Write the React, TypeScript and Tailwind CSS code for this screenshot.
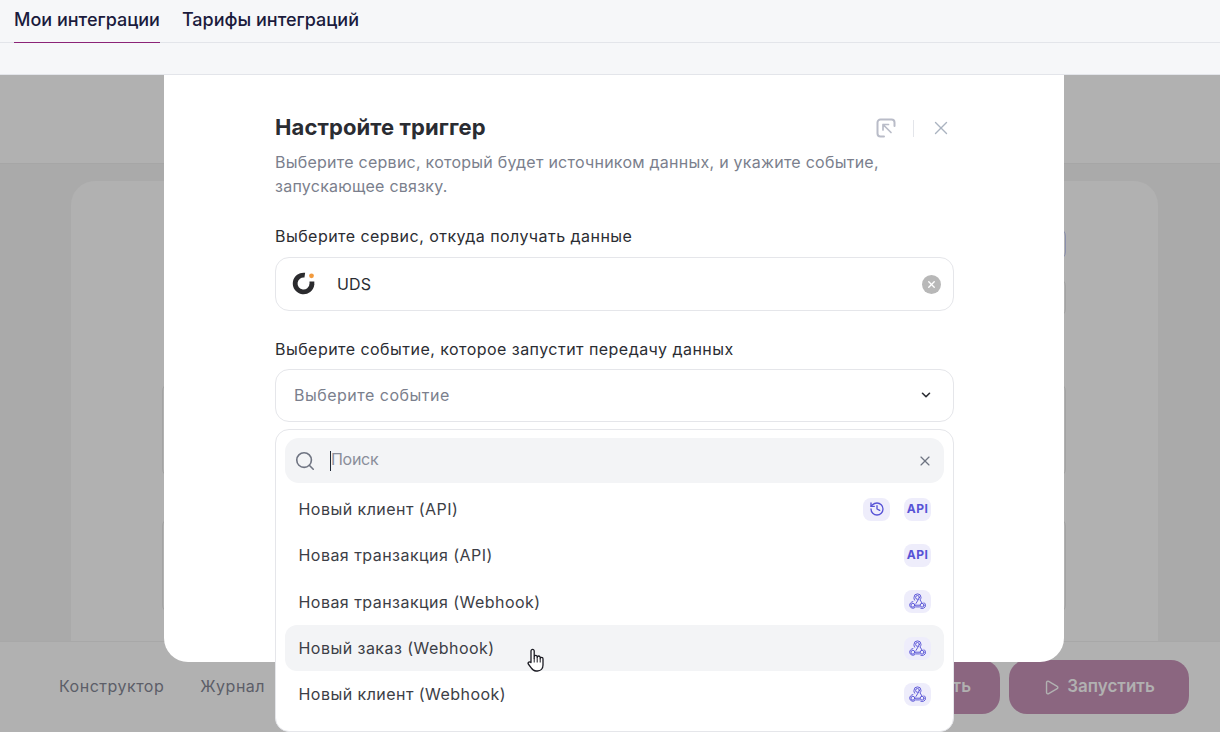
import { ChevronDown, History, Play, Search, X } from "lucide-react";

const events = [
  { name: "Новый клиент (API)", badges: ["history", "api"] },
  { name: "Новая транзакция (API)", badges: ["api"] },
  { name: "Новая транзакция (Webhook)", badges: ["webhook"] },
  { name: "Новый заказ (Webhook)", badges: ["webhook"], hover: true },
  { name: "Новый клиент (Webhook)", badges: ["webhook"] },
];

function WebhookIcon() {
  return (
    <svg width="17" height="17" viewBox="0 0 17 17" fill="none" stroke="currentColor" strokeWidth="0.95" strokeLinecap="round">
      <circle cx="8.5" cy="4.4" r="1.9" />
      <circle cx="3.9" cy="12.2" r="1.9" />
      <circle cx="13.1" cy="12.2" r="1.9" />
      <path d="M5.6 7.2A3.6 3.6 0 0 1 5 4.4a3.5 3.5 0 0 1 7 0c0 1-.4 1.8-1 2.5L13 10" />
      <path d="M9.4 6.4 7 10.4M3.9 8.6c-2 .3-3.2 2-3.2 3.6a3.2 3.2 0 0 0 5.8 1.7h4" />
      <path d="M6.2 12.2h4.6M15 9.7c1.2.7 1.6 1.6 1.6 2.5a3.4 3.4 0 0 1-5 3" />
    </svg>
  );
}

function Badge({ kind }: { kind: string }) {
  if (kind === "api") {
    return (
      <span className="flex h-[23px] w-[27px] items-center justify-center rounded-lg bg-[#eeedfb] text-[12px] font-bold text-[#5753d6]">
        API
      </span>
    );
  }
  return (
    <span className="flex h-[23px] w-[27px] items-center justify-center rounded-lg bg-[#eeedfb] text-[#5753d6]">
      {kind === "history" ? <History size={16} strokeWidth={2} /> : <WebhookIcon />}
    </span>
  );
}

function HandCursor() {
  return (
    <svg width="18" height="26" viewBox="0 0 18 26" className="absolute left-[527px] top-[648px]">
      <path
        d="M4 14V3a1.6 1.6 0 0 1 3.2 0v7.5-1.6a1.5 1.5 0 0 1 3 0v1.2-.6a1.5 1.5 0 0 1 3 0v1.2a1.4 1.4 0 0 1 2.8 0v6.3c0 3.7-2.4 6-5.6 6H9c-2.2 0-3.5-1-4.6-2.8L1.3 16c-.9-1.6 1.5-3 2.7-1.5z"
        fill="#fff"
        stroke="#1a1a22"
        strokeWidth="1.3"
        strokeLinejoin="round"
      />
      <path d="M7.2 10.5v4M10.2 10.5v4M13.2 11v3.5" stroke="#1a1a22" strokeWidth="1" fill="none" />
    </svg>
  );
}

export default function App() {
  return (
    <div className="relative flex h-[732px] w-[1220px] flex-col overflow-hidden bg-[#b1b1b1] font-['Inter',sans-serif]">
      {/* top tabs */}
      <nav className="flex h-[43px] shrink-0 gap-[22px] border-b border-[#e3e5ea] bg-[#f6f7f9] pl-[14px] text-[18px] font-medium text-[#1b1b3d]">
        <a className="-mb-px flex items-center border-b border-[#8b2377] pb-[3px]">Мои интеграции</a>
        <a className="flex items-center pb-[3px]">Тарифы интеграций</a>
      </nav>
      <div className="h-[32px] shrink-0 border-b border-[#e3e5ea] bg-[#f6f7f9]" />

      {/* dimmed page behind the dialog */}
      <div className="h-[89px] shrink-0 border-b border-[#a6a6a6] bg-[#b1b1b1]" />
      <div className="flex min-h-0 flex-1 flex-col bg-[#aaaaaa] px-[71px] pt-[17px] pr-[62px]">
        <div className="flex flex-1 flex-col rounded-t-[24px] bg-[#b1b1b1] pt-[47px] pl-[91px] pr-[92px]">
          <div className="ml-auto h-[32px] w-[120px] rounded-lg border border-[#8b90ad]" />
          <div className="ml-auto mt-[18px] h-[39px] w-[120px] rounded-lg border border-[#a3a3a3]" />
          <div className="mt-[66px] h-[94px] rounded-lg border border-[#a3a3a3]" />
          <div className="mt-[41px] h-[95px] rounded-lg border border-[#a3a3a3]" />
        </div>
      </div>
      <footer className="flex h-[91px] shrink-0 items-center justify-between border-t border-[#a8a8a8] bg-[#b1b1b1] pl-[59px] pr-[31px]">
        <div className="flex gap-[36px] pb-[2px] text-[16px] tracking-[0.5px] text-[#5c5e68]">
          <span>Конструктор</span>
          <span>Журнал</span>
        </div>
        <div className="flex gap-[9px] text-[17px] font-semibold text-[#b1b1b1]">
          <button className="h-[54px] w-[150px] rounded-[18px] bg-[#8b6680]">Сохранить</button>
          <button className="flex h-[54px] w-[180px] items-center justify-center gap-[7px] rounded-[18px] bg-[#8b6680]">
            <Play size={17} strokeWidth={2} />
            Запустить
          </button>
        </div>
      </footer>

      {/* dialog */}
      <div className="absolute left-[164px] top-[75px] h-[587px] w-[900px] rounded-b-[24px] bg-white pl-[111px] pr-[110px] pt-[38px]">
        <div className="flex items-center justify-between">
          <h2 className="text-[22px] font-bold leading-[28px] tracking-[0.1px] text-[#2a2c32]">Настройте триггер</h2>
          <div className="flex items-center gap-[17px] pr-[3px] pt-[2px] text-[#b9bcc8]">
            <svg width="20" height="20" viewBox="0 0 20 20" fill="none" stroke="currentColor" strokeWidth="2" strokeLinecap="round">
              <path d="M18.5 8V4.5a3 3 0 0 0-3-3h-11a3 3 0 0 0-3 3v11a3 3 0 0 0 3 3H8" />
              <path d="M7 6.5h5.5M7 6.5V12M7 6.5l8 8" strokeWidth="1.7" />
            </svg>
            <span className="h-[17px] w-px bg-[#e3e5ea]" />
            <X size={20} strokeWidth={1.5} className="-mx-[1px] h-[22px] w-[22px] text-[#aab3c0]" />
          </div>
        </div>
        <p className="mt-[9px] text-[16px] leading-[24px] tracking-[0.25px] text-[#7b7f8d]">
          Выберите сервис, который будет источником данных, и укажите событие, запускающее связку.
        </p>

        <label className="mt-[26px] block text-[16px] leading-[24px] tracking-[0.46px] text-[#2b2d33]">
          Выберите сервис, откуда получать данные
        </label>
        <div className="mt-[9px] flex h-[54px] items-center rounded-[14px] border border-[#e5e6ea] pl-[16px] pr-[12px]">
          <svg width="24" height="24" viewBox="0 0 24 24" fill="none">
            <path d="M12.8 3.2A8.4 8.4 0 1 0 19.9 12.5" stroke="#2b2b2e" strokeWidth="4.8" />
            <path d="M17.5 9.5h4.8v3.5h-4.8z" fill="#2b2b2e" />
            <circle cx="19.5" cy="3.8" r="2.4" fill="#f29a3d" />
          </svg>
          <span className="ml-[21px] flex-1 text-[16px] tracking-[0.2px] text-[#2b2d33]">UDS</span>
          <span className="flex h-[19px] w-[19px] items-center justify-center rounded-full bg-[#b8b8b8] text-white">
            <X size={11} strokeWidth={3} />
          </span>
        </div>

        <label className="mt-[26px] block text-[16px] leading-[24px] tracking-[0.46px] text-[#2b2d33]">
          Выберите событие, которое запустит передачу данных
        </label>
        <div className="mt-[8px] flex h-[53px] items-center justify-between rounded-[14px] border border-[#e5e6ea] pb-[2px] pl-[18px] pr-[20px] text-[16px] tracking-[0.5px] text-[#7b7f8d]">
          Выберите событие
          <ChevronDown size={14} strokeWidth={2.75} className="text-[#2b2d33]" />
        </div>

        {/* event dropdown */}
        <div className="absolute left-[111px] top-[354px] h-[303px] w-[679px] rounded-[14px] border border-[#e5e6ea] bg-white px-[9px] pt-[8px]">
          <div className="flex h-[45px] items-center rounded-[14px] bg-[#f3f4f6] pl-[9px] pr-[12px] text-[#6f7482]">
            <Search size={22} strokeWidth={1.75} />
            <span className="ml-[14px] h-[20px] w-px bg-[#1f2937]" />
            <span className="flex-1 pb-[3px] text-[16px] tracking-[-0.3px] text-[#8a8e9a]">Поиск</span>
            <X size={16} strokeWidth={1.75} className="-mr-[1px]" />
          </div>
          <ul className="mt-[3px]">
            {events.map((e) => (
              <li
                key={e.name}
                className={`flex h-[46.3px] items-center justify-between rounded-[12px] pl-[13.5px] pr-[13px] text-[16px] tracking-[0.46px] text-[#3c3e46] ${e.hover ? "bg-[#f3f4f6]" : ""}`}
              >
                {e.name}
                <span className="flex gap-[14px]">
                  {e.badges.map((b) => (
                    <Badge key={b} kind={b} />
                  ))}
                </span>
              </li>
            ))}
          </ul>
        </div>
      </div>
      <HandCursor />
    </div>
  );
}
